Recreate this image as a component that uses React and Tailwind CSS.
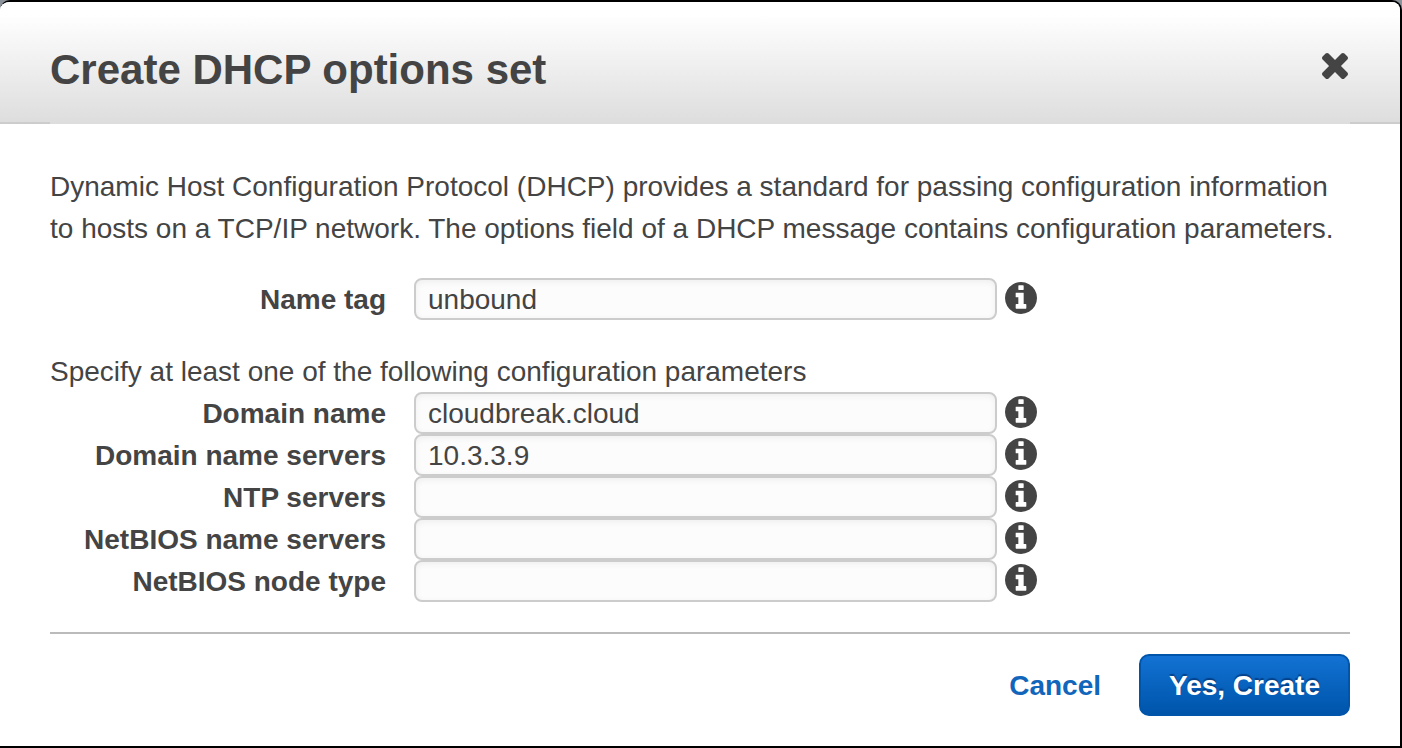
import { useId } from 'react';

function InfoIcon() {
  return (
    <svg viewBox="128 128 1536 1536" className="size-8" fill="currentColor" aria-hidden="true">
      <path d="M1152 1376v-160q0-14-9-23t-23-9h-96v-512q0-14-9-23t-23-9h-320q-14 0-23 9t-9 23v160q0 14 9 23t23 9h96v320h-96q-14 0-23 9t-9 23v160q0 14 9 23t23 9h448q14 0 23-9t9-23zm-128-896v-160q0-14-9-23t-23-9h-192q-14 0-23 9t-9 23v160q0 14 9 23t23 9h192q14 0 23-9t9-23zm640 416q0 209-103 385.5t-279.5 279.5-385.5 103-385.5-103-279.5-279.5-103-385.5 103-385.5 279.5-279.5 385.5-103 385.5 103 279.5 279.5 103 385.5z" />
    </svg>
  );
}

function CloseIcon() {
  return (
    <svg viewBox="302 302 1188 1188" className="size-[26px]" fill="currentColor" aria-hidden="true">
      <path d="M1490 1258q0 40-28 68l-136 136q-28 28-68 28t-68-28l-294-294-294 294q-28 28-68 28t-68-28l-136-136q-28-28-28-68t28-68l294-294-294-294q-28-28-28-68t28-68l136-136q28-28 68-28t68 28l294 294 294-294q28-28 68-28t68 28l136 136q28 28 28 68t-28 68l-294 294 294 294q28 28 28 68z" />
    </svg>
  );
}

function Field({ label, value = '' }) {
  const id = useId();
  return (
    <div className="flex items-start">
      <label htmlFor={id} className="w-[336px] shrink-0 pt-0.5 text-right leading-10 font-bold">
        {label}
      </label>
      <input
        id={id}
        type="text"
        defaultValue={value}
        className="ml-7 h-[42px] w-[583px] min-w-0 rounded-lg border-2 border-[#cccccc] bg-[#fcfcfc] px-3 pt-0.5 text-[#444444] shadow-[inset_0_2px_6px_rgba(0,0,0,0.06)] outline-none"
      />
      <button type="button" aria-label={'About ' + label} className="mt-1 ml-2 shrink-0">
        <InfoIcon />
      </button>
    </div>
  );
}

export default function App() {
  return (
    <div className="bg-[#8d939b] font-['Liberation_Sans',Arial,sans-serif] text-[28px] leading-[42px] text-[#444444]">
      <div
        role="dialog"
        aria-labelledby="dialog-title"
        className="flex min-h-screen flex-col overflow-hidden rounded-t-[10px] border-y-2 border-r-2 border-black bg-white"
      >
        <header className="bg-linear-to-b from-white from-10% to-[#dddddd]">
          <div className="flex h-[120px] items-center justify-between pt-3 pr-[52px] pl-[50px]">
            <h1 id="dialog-title" className="pt-1 text-[42px] leading-[50px] font-bold">
              Create DHCP options set
            </h1>
            <button type="button" aria-label="Close" className="pb-1">
              <CloseIcon />
            </button>
          </div>
          <div className="flex justify-between">
            <div className="h-0.5 w-[50px] bg-[#cccccc]" />
            <div className="h-0.5 w-[50px] bg-[#cccccc]" />
          </div>
        </header>
        <form className="px-[50px] pt-[42px]" onSubmit={(e) => e.preventDefault()}>
          <p>
            Dynamic Host Configuration Protocol (DHCP) provides a standard for passing configuration
            information to hosts on a TCP/IP network. The options field of a DHCP message contains
            configuration parameters.
          </p>
          <div className="mt-7">
            <Field label="Name tag" value="unbound" />
          </div>
          <p className="mt-8 leading-10">
            Specify at least one of the following configuration parameters
          </p>
          <Field label="Domain name" value="cloudbreak.cloud" />
          <Field label="Domain name servers" value="10.3.3.9" />
          <Field label="NTP servers" />
          <Field label="NetBIOS name servers" />
          <Field label="NetBIOS node type" />
          <div className="mt-[30px] flex items-center justify-end gap-[38px] border-t-2 border-[#bbbbbb] pt-5 pb-[30px]">
            <button type="button" className="pt-0.5 font-bold text-[#1166bb]">
              Cancel
            </button>
            <button
              type="submit"
              className="h-[62px] w-[211px] rounded-[10px] border-2 border-[#0055aa] bg-linear-to-b from-[#1272d3] to-[#0055aa] pt-0.5 font-bold text-white text-shadow-[0_-2px_1px_rgba(0,40,100,0.6)]"
            >
              Yes, Create
            </button>
          </div>
        </form>
      </div>
    </div>
  );
}
